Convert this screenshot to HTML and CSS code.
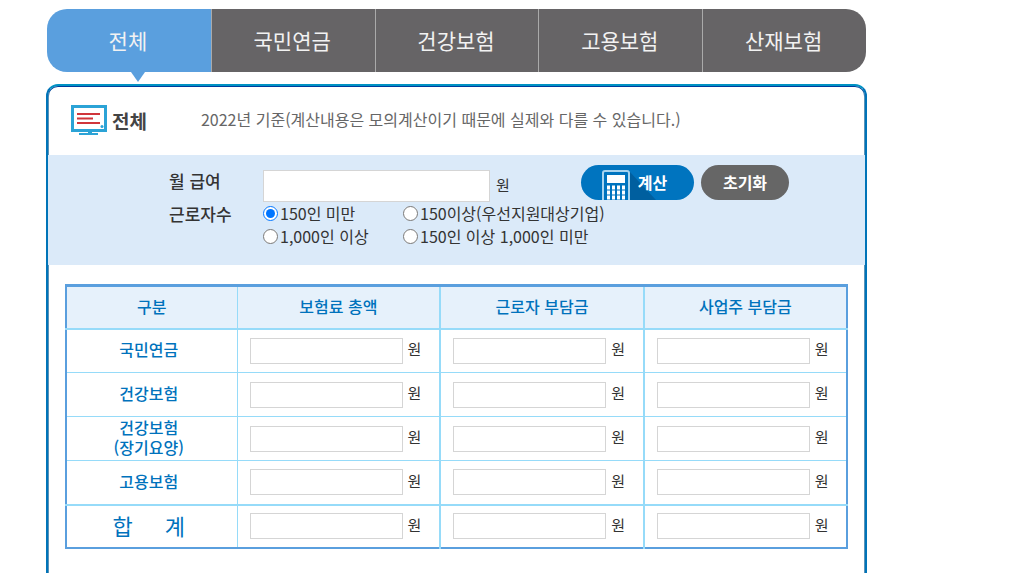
FILE: index.html
```
<!DOCTYPE html>
<html lang="ko">
<head>
  <meta charset="UTF-8" />
  <meta name="viewport" content="width=device-width, initial-scale=1.0"/>
  <title>4대보험 모의계산</title>
  <link rel="stylesheet" href="styles.css">
</head>
<body>
  <div class="wrap">
    <nav class="tabs">
      <a href="#all" class="active">전체</a>
      <a href="#pension">국민연금</a>
      <a href="#health">건강보험</a>
      <a href="#employ">고용보험</a>
      <a href="#accident">산재보험</a>
    </nav>

    <form class="panel">
      <div class="panel-head">
        <svg class="monitor" width="36" height="31" viewBox="0 0 36 31" aria-hidden="true">
          <rect x="1.5" y="1.5" width="33" height="24" fill="#fff" stroke="#2ba3d6" stroke-width="3"/>
          <path d="M6 9h23M6 13.500h16M6 18h23" stroke="#d0353b" stroke-width="2"/>
          <circle cx="31" cy="21.500" r="1.500" fill="#2ba3d6"/>
          <path d="M17 26h4v2h6v2H8v-2h9z" fill="#2ba3d6"/>
        </svg>
        <h1>전체</h1>
        <p>2022년 기준(계산내용은 모의계산이기 때문에 실제와 다를 수 있습니다.)</p>
      </div>

      <div class="options">
        <label class="name" for="salary">월 급여</label>
        <div class="salary"><input type="text" id="salary"><span>원</span></div>
        <div class="buttons">
          <button type="button" class="calc">
            <svg width="54" height="35" viewBox="0 0 54 35" aria-hidden="true">
              <path d="M27 6l27 29H24z" fill="#005f9f"/>
              <rect x="1" y="6" width="26" height="34" rx="2" fill="#0074bf" stroke="#a9d4ef" stroke-width="2"/>
              <rect x="5" y="10" width="18" height="8" fill="#fff"/>
              <path d="M5 22.500h18M5 27.500h18M5 32.500h18" stroke="#fff" stroke-width="4" stroke-dasharray="3 2"/>
            </svg>
            <span>계산</span>
          </button>
          <button type="reset" class="reset">초기화</button>
        </div>
        <span class="name" id="workers">근로자수</span>
        <div class="radios" role="radiogroup" aria-labelledby="workers">
          <label><input type="radio" name="worker" checked>150인 미만</label>
          <label><input type="radio" name="worker">150이상(우선지원대상기업)</label>
          <label><input type="radio" name="worker">1,000인 이상</label>
          <label><input type="radio" name="worker">150인 이상 1,000인 미만</label>
        </div>
      </div>

      <div class="result">
        <table>
          <colgroup><col class="col-name"><col><col><col></colgroup>
          <thead>
            <tr>
              <th>구분</th>
              <th>보험료 총액</th>
              <th>근로자 부담금</th>
              <th>사업주 부담금</th>
            </tr>
          </thead>
          <tbody>
            <tr>
              <th>국민연금</th>
              <td><div class="won"><input type="text" aria-label="국민연금 총액"><span>원</span></div></td>
              <td><div class="won"><input type="text" aria-label="국민연금 근로자"><span>원</span></div></td>
              <td><div class="won"><input type="text" aria-label="국민연금 사업주"><span>원</span></div></td>
            </tr>
            <tr>
              <th>건강보험</th>
              <td><div class="won"><input type="text" aria-label="건강보험 총액"><span>원</span></div></td>
              <td><div class="won"><input type="text" aria-label="건강보험 근로자"><span>원</span></div></td>
              <td><div class="won"><input type="text" aria-label="건강보험 사업주"><span>원</span></div></td>
            </tr>
            <tr>
              <th>건강보험<br>(장기요양)</th>
              <td><div class="won"><input type="text" aria-label="장기요양 총액"><span>원</span></div></td>
              <td><div class="won"><input type="text" aria-label="장기요양 근로자"><span>원</span></div></td>
              <td><div class="won"><input type="text" aria-label="장기요양 사업주"><span>원</span></div></td>
            </tr>
            <tr>
              <th>고용보험</th>
              <td><div class="won"><input type="text" aria-label="고용보험 총액"><span>원</span></div></td>
              <td><div class="won"><input type="text" aria-label="고용보험 근로자"><span>원</span></div></td>
              <td><div class="won"><input type="text" aria-label="고용보험 사업주"><span>원</span></div></td>
            </tr>
            <tr class="total">
              <th><div><span>합</span> <span>계</span></div></th>
              <td><div class="won"><input type="text" aria-label="합계 총액"><span>원</span></div></td>
              <td><div class="won"><input type="text" aria-label="합계 근로자"><span>원</span></div></td>
              <td><div class="won"><input type="text" aria-label="합계 사업주"><span>원</span></div></td>
            </tr>
          </tbody>
        </table>
      </div>
    </form>
  </div>
</body>
</html>
```
FILE: styles.css
```
* {
  box-sizing: border-box;
}
body {
  margin: 0;
  background: #fff;
  color: #333;
  font-family: "Noto Sans CJK KR", sans-serif;
  font-size: 16px;
  line-height: 20px;
}
input,
button {
  margin: 0;
  font-family: inherit;
}
.wrap {
  display: flex;
  flex-direction: column;
  min-height: 100vh;
  max-width: 867px;
  padding: 9px 0 0 46px;
}

/* tabs */
.tabs {
  display: grid;
  grid-template-columns: repeat(5, 1fr);
  margin: 0 1px;
}
.tabs a {
  position: relative;
  padding: 16px 2px 16px 0;
  border-left: 1px solid #aaa;
  background: #666466;
  color: #f2f2f2;
  font-size: 21px;
  line-height: 31px;
  text-align: center;
  text-decoration: none;
}
.tabs a:first-child {
  border-left: 0;
  border-radius: 20px 0 0 20px;
}
.tabs a:last-child {
  border-radius: 0 20px 20px 0;
}
.tabs a.active {
  background: #5a9fde;
}
.tabs a.active::after {
  content: "";
  position: absolute;
  top: 100%;
  left: 84px;
  border: 7px solid transparent;
  border-top: 10px solid #5a9fde;
  border-bottom: 0;
}

/* panel */
.panel {
  flex: 1;
  margin-top: 12px;
  border: 2px solid #0074b8;
  border-top-color: #0092c4;
  border-bottom: 0;
  border-radius: 12px 12px 0 0;
  box-shadow: inset 0 1px #003c9c, inset 1px 0 #5c93b8, inset -1px 0 #5c93b8;
}
.panel-head {
  display: flex;
  align-items: center;
  height: 69px;
  padding-left: 23px;
}
.panel-head h1 {
  margin: 0 54px 0 5px;
  color: #444;
  font-size: 19px;
}
.panel-head p {
  margin: 0;
  padding-bottom: 3px;
  color: #666;
  font-size: 16px;
}

.options {
  display: grid;
  grid-template-columns: 94px 1fr auto;
  padding: 10px 76px 17px 121px;
  background: #dbeaf9;
}
.name {
  padding-top: 6px;
  font-size: 17px;
  font-weight: 500;
}
.options span.name {
  padding-top: 2px;
}
.salary {
  display: flex;
  align-items: center;
  gap: 6px;
  padding-top: 5px;
}
.salary input {
  width: 227px;
  height: 32px;
  border: 1px solid #d5d5d5;
}
.salary span,
.won span {
  padding-bottom: 3px;
  font-size: 15px;
}
.buttons {
  display: flex;
  gap: 7px;
}
.buttons button {
  height: 35px;
  padding: 0 0 2px;
  border: 0;
  border-radius: 18px;
  color: #fff;
  font-size: 16px;
  font-weight: 700;
  overflow: hidden;
}
.buttons .calc {
  position: relative;
  width: 113px;
  padding-left: 30px;
  background: #0074bf;
}
.calc svg {
  position: absolute;
  top: 0;
  left: 21px;
}
.calc span {
  position: relative;
}
.buttons .reset {
  width: 88px;
  background: #666;
}
.radios {
  display: grid;
  grid-column: 2 / 4;
  grid-template-columns: 140px 1fr;
  grid-auto-rows: 23px;
}
.radios label {
  display: flex;
  align-items: center;
  gap: 2px;
  padding-bottom: 1px;
}
.radios input {
  width: 15px;
  height: 15px;
}

/* result table */
.result {
  padding: 19px 17px;
}
table {
  width: 100%;
  table-layout: fixed;
  border-collapse: collapse;
  border: 2px solid #5a9fde;
  border-top-width: 3px;
}
.col-name {
  width: 171px;
}
th,
td {
  height: 44px;
  padding: 0;
  border: 1px solid #96dbf9;
}
th {
  padding-bottom: 3px;
  color: #0072bc;
  font-size: 16px;
  font-weight: 500;
}
td + td,
thead th:nth-child(n+3) {
  border-left-width: 2px;
}
th + td {
  border-left-width: 1px;
}
thead th {
  height: 43px;
  background: #e6f1fb;
  border-bottom-width: 2px;
}
tbody th {
  padding-right: 6px;
}
.total th,
.total td {
  height: 43px;
  border-top-width: 2px;
}
.total th div {
  display: flex;
  justify-content: center;
  gap: 32px;
  font-size: 22px;
  font-weight: 400;
}
.won {
  display: flex;
  align-items: center;
  gap: 5px;
  padding-left: 12px;
}
.won input {
  width: 153px;
  height: 26px;
  border: 1px solid #d5d5d5;
}
```
